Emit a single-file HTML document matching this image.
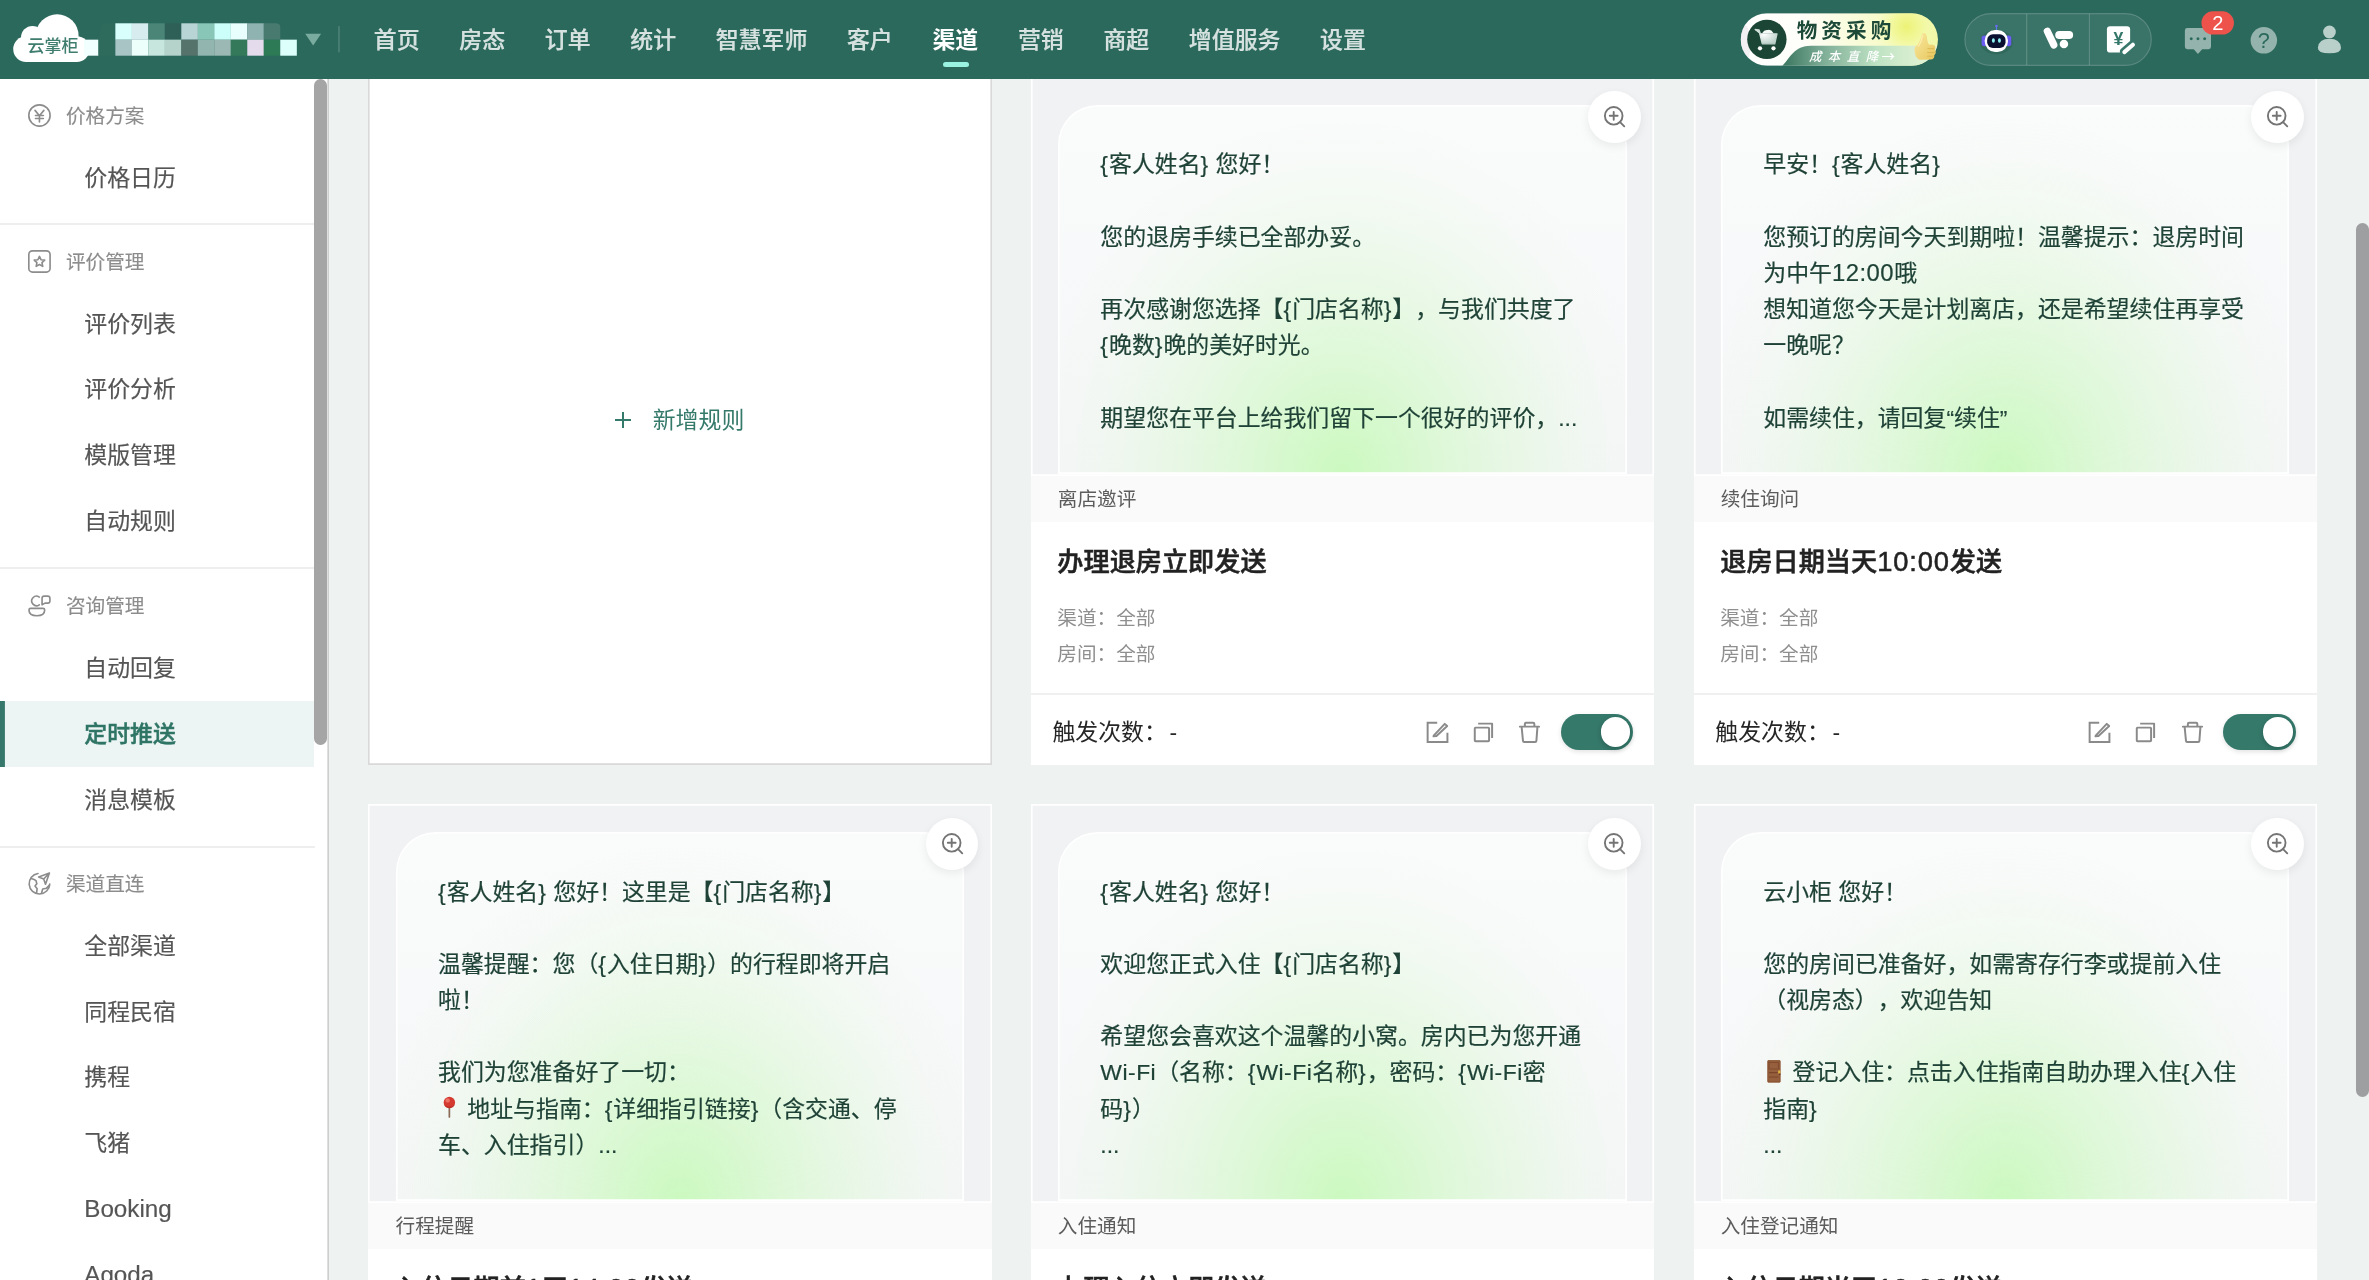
<!DOCTYPE html>
<html lang="zh-CN">
<head>
<meta charset="utf-8">
<title>定时推送 - 云掌柜</title>
<style>
*{box-sizing:border-box;margin:0;padding:0}
html,body{width:2369px;height:1280px;overflow:hidden;background:#eef2f1}
body{text-spacing-trim:space-all;font-family:"Liberation Sans","Noto Sans CJK SC",sans-serif;color:#262626;-webkit-font-smoothing:antialiased}
#app{will-change:transform;position:absolute;left:0;top:0;width:1448.1px;height:782.4px;zoom:1.636;overflow:hidden;background:#eef2f1;font-size:14px}
.abs{position:absolute}
/* ---------- header ---------- */
#hd{position:absolute;left:0;top:0;width:100%;height:48.25px;background:#2c695d;z-index:10}
#nav{position:absolute;left:216.4px;top:1.05px;height:48px;display:flex;white-space:nowrap}
#nav a{display:block;padding:0 12.13px;line-height:47.6px;font-size:14px;font-weight:500;-webkit-text-stroke:.12px rgba(255,255,255,.8);color:rgba(255,255,255,.8);text-decoration:none;position:relative}
#nav a.on{color:#fff;font-weight:700;-webkit-text-stroke:0}
#nav a.on:after{content:"";position:absolute;left:50%;margin-left:-7.5px;bottom:7.9px;width:16px;height:3.3px;border-radius:2px;background:#9af2e1}
/* ---------- sidebar ---------- */
#sb{position:absolute;left:0;top:48px;width:201.15px;bottom:0;background:#fff;box-shadow:inset -1px 0 0 #cecece}
#sb .g{position:absolute;left:40.3px;font-size:12px;line-height:20px;color:#8c8c8c;white-space:nowrap;-webkit-text-stroke:.08px #8c8c8c}
#sb .i{position:absolute;left:51.5px;font-size:14px;line-height:22px;color:#555;white-space:nowrap;-webkit-text-stroke:.1px #555}
#sb .dv{position:absolute;left:0;width:192px;height:0;margin-top:.5px;box-shadow:0 0 0 .5px #ebebeb}
#sb svg{position:absolute;left:17.1px;width:14px;height:14px;overflow:visible}
#sb .act{position:absolute;left:0;top:380.6px;width:192px;height:40.4px;background:#edf5f4;box-shadow:inset 3px 0 0 #35776a}
.thumb{position:absolute;width:8px;border-radius:4px;background:#a5a5a5}
/* ---------- main ---------- */
#main{position:absolute;left:201.15px;top:48px;right:0;bottom:0;overflow:hidden;background:#eef2f1}

/*CARDCSS*/
.add{position:absolute;width:381.2px;height:420.6px;background:#fff;box-shadow:inset 0 0 0 1px #d9d9d9}
.add .plus{position:absolute;left:150.5px;top:204.3px;width:10px;height:10px}
.add .plus:before{content:"";position:absolute;left:0;top:4.4px;width:10px;height:1.2px;background:#35796b}
.add .plus:after{content:"";position:absolute;left:4.4px;top:0;width:1.2px;height:10px;background:#35796b}
.add .addt{position:absolute;left:173.8px;top:199.2px;line-height:22px;font-size:14px;color:#35796b;white-space:nowrap}
.card{position:absolute;width:381.2px;height:420.6px;background:#fff}
.pv{position:absolute;left:0;top:0;width:100%;height:243.5px;background:#f1f2f4;box-shadow:inset 0 0 0 1px #fff;overflow:hidden}
.ph{position:absolute;left:17px;right:17px;top:17px;bottom:1.1px;box-shadow:inset 0 0 0 1px #fff;border-radius:24px 24px 0 0;background:radial-gradient(ellipse 188px 218px at 50% 100%,rgba(203,249,191,1.000) 0%,rgba(203,249,191,0.858) 10%,rgba(203,249,191,0.724) 20%,rgba(203,249,191,0.596) 30%,rgba(203,249,191,0.477) 40%,rgba(203,249,191,0.366) 50%,rgba(203,249,191,0.265) 60%,rgba(203,249,191,0.175) 70%,rgba(203,249,191,0.097) 80%,rgba(203,249,191,0.035) 90%,rgba(203,249,191,0.000) 100%),linear-gradient(180deg,#fafbfb,#f5f6f7)}
.tx{position:absolute;left:25.6px;top:25.3px;font-size:14px;line-height:22.1px;color:#1f4237;white-space:nowrap;-webkit-text-stroke:.12px #1f4237}
.em{display:inline-block;width:14px;height:14px;vertical-align:-1.55px}
.zm{position:absolute;right:8.4px;top:8.1px;width:32px;height:32px;border-radius:50%;background:#fff;box-shadow:0 2px 6px rgba(0,0,0,.07)}
.zm svg{position:absolute;left:9px;top:9px;width:14px;height:14px;overflow:visible}
.lb{position:absolute;left:0;top:243.5px;width:100%;height:28.05px;background:#fafafa;padding-left:16.6px;font-size:12px;line-height:28.05px;padding-top:.75px;color:#5c5c5c;white-space:nowrap}
.tt{position:absolute;left:16.3px;top:283.9px;font-size:16px;line-height:25px;font-weight:500;color:#222;white-space:nowrap;-webkit-text-stroke:.32px #222}
.mt{position:absolute;left:16.3px;font-size:12px;line-height:22px;color:#8f8f8f;white-space:nowrap}
.fl{position:absolute;left:0;top:376.3px;width:100%;height:1px;background:#f0f0f0}
.fc{position:absolute;left:13.3px;top:389.65px;font-size:14px;line-height:22px;color:#262626;white-space:nowrap}
.ic{position:absolute;top:393.5px;width:14px;height:14px;overflow:visible}
.sw{position:absolute;left:323.85px;top:389.2px;width:44.6px;height:22.1px;border-radius:11.05px;background:#35796b;box-shadow:0 1px 3px rgba(0,0,0,.12)}
.sw i{position:absolute;right:2px;top:2px;width:18.1px;height:18.1px;border-radius:50%;background:#fff;box-shadow:0 1px 3px rgba(0,20,15,.25)}
.tx .b{letter-spacing:.6px}.tx .d{font-size:14.6px;letter-spacing:.3px}.tx .l{letter-spacing:.3px}.tt .td{font-size:16.7px;letter-spacing:.52px}
/*/CARDCSS*/
</style>
</head>
<body>
<div id="app">

<!-- ================= HEADER ================= -->
<div id="hd">
  <!--LOGO-->
  <svg class="abs" style="left:0.00px;top:0.00px;width:244.50px;height:48.90px;overflow:visible" viewBox="0 0 2369 474" ><g fill="#fff"><rect x="78" y="215" width="452" height="153" rx="76"/><circle cx="338" cy="212" r="127"/><circle cx="192" cy="222" r="68"/></g><text x="163" y="306" font-size="101" font-weight="500" fill="#3f7d6f" font-family="Liberation Sans,Noto Sans CJK SC,sans-serif" textLength="302" lengthAdjust="spacingAndGlyphs">云掌柜</text><rect x="497" y="235" width="86" height="95" fill="#f1fffe"/><path d="M583 330 V235 L 600 150 Q 610 138 640 138 H683 V330 Z" fill="#2e6b5c"/><rect x="683.0" y="138" width="98.2" height="97.5" fill="#d8fffc"/><rect x="780.7" y="138" width="98.2" height="97.5" fill="#d6ecef"/><rect x="878.4" y="138" width="98.2" height="97.5" fill="#4a8577"/><rect x="976.1" y="138" width="98.2" height="97.5" fill="#2f6058"/><rect x="1073.8" y="138" width="98.2" height="97.5" fill="#b8d4d4"/><rect x="1171.5" y="138" width="98.2" height="97.5" fill="#88c6b8"/><rect x="1269.2" y="138" width="98.2" height="97.5" fill="#ccfff9"/><rect x="1366.9" y="138" width="98.2" height="97.5" fill="#e8fffe"/><rect x="1464.6" y="138" width="98.2" height="97.5" fill="#8fb3b0"/><path d="M1562.3 138 H1632.3 Q1660.0 138 1660.0 160 V235 H1562.3 Z" fill="#487a70"/><rect x="683.0" y="235" width="98.2" height="95" fill="#a9c4c4"/><rect x="780.7" y="235" width="98.2" height="95" fill="#ecfffb"/><rect x="878.4" y="235" width="98.2" height="95" fill="#c6e6de"/><rect x="976.1" y="235" width="98.2" height="95" fill="#b5d2cb"/><rect x="1073.8" y="235" width="98.2" height="95" fill="#55726b"/><rect x="1171.5" y="235" width="98.2" height="95" fill="#92b5b0"/><rect x="1269.2" y="235" width="98.2" height="95" fill="#9bb8b4"/><rect x="1366.9" y="235" width="98.2" height="95" fill="#347a5a"/><rect x="1464.6" y="235" width="98.2" height="95" fill="#e4dcec"/><rect x="1562.3" y="235" width="98.2" height="95" fill="#2d7a56"/><rect x="1660.0" y="235" width="98.2" height="95" fill="#dcfffc"/><path d="M1808 200 H1902 L1855 270 Z" fill="#7aab9f"/><rect x="2005" y="155" width="6" height="155" fill="rgba(255,255,255,.26)"/></svg>
  <!--/LOGO-->
  <div id="nav">
    <a>首页</a><a>房态</a><a>订单</a><a>统计</a><a>智慧军师</a><a>客户</a><a class="on">渠道</a><a>营销</a><a>商超</a><a>增值服务</a><a>设置</a>
  </div>
  <!--HDRIGHT-->
  <svg class="abs" style="left:1057.46px;top:3.06px;width:134.47px;height:42.79px;overflow:visible" viewBox="0 0 2369 754" ><defs><clipPath id="bp"><rect x="115" y="88" width="2125" height="567" rx="283"/></clipPath><linearGradient id="bg1" x1="0" x2="1" y1="0" y2="0"><stop offset="0" stop-color="#fff"/><stop offset=".3" stop-color="#fefefa"/><stop offset=".6" stop-color="#f9fcd8"/><stop offset="1" stop-color="#f0f8a6"/></linearGradient><radialGradient id="bg2" cx="1900" cy="235" r="330" gradientUnits="userSpaceOnUse"><stop offset="0" stop-color="#ecf274"/><stop offset=".45" stop-color="#f1f792" stop-opacity=".8"/><stop offset="1" stop-color="#f6fbb8" stop-opacity="0"/></radialGradient><linearGradient id="bg3" x1="600" x2="2240" y1="0" y2="0" gradientUnits="userSpaceOnUse"><stop offset="0" stop-color="#3f7a64"/><stop offset=".25" stop-color="#7fae97"/><stop offset=".6" stop-color="#bfe3c4"/><stop offset="1" stop-color="#eaf6d8"/></linearGradient><radialGradient id="bg4" cx=".4" cy=".35" r=".7"><stop offset="0" stop-color="#fff"/><stop offset="1" stop-color="#b9cfc7"/></radialGradient><linearGradient id="bg5" x1="0" x2="1" y1="0" y2="1"><stop offset="0" stop-color="#f9e9a0"/><stop offset="1" stop-color="#e7c65c"/></linearGradient></defs><g clip-path="url(#bp)"><rect x="115" y="88" width="2125" height="567" fill="url(#bg1)"/><rect x="115" y="88" width="2125" height="567" fill="url(#bg2)"/><path d="M560 660 C 650 570 690 440 870 440 H2240 V660 Z" fill="url(#bg3)"/><ellipse cx="160" cy="420" rx="60" ry="200" fill="#e9e4ea" opacity=".55"/></g><circle cx="397" cy="370" r="212" fill="#1b4534"/><path d="M275 266 L312 272 L347 418 H482 L506 310 H330 Z" fill="url(#bg4)" stroke="url(#bg4)" stroke-width="14" stroke-linejoin="round"/><path d="M345 305 Q 370 262 405 270 Q 440 258 470 305 Z" fill="#f4f8f6"/><path d="M272 264 L314 271 L324 310" fill="none" stroke="#c9dad3" stroke-width="16" stroke-linecap="round" stroke-linejoin="round"/><circle cx="323" cy="466" r="23" fill="#fff"/><circle cx="468" cy="466" r="23" fill="#fff"/><text x="718" y="360" font-size="222" font-weight="700" fill="#1d4a38" font-family="Liberation Sans,Noto Sans CJK SC,sans-serif" textLength="1020" lengthAdjust="spacing">物资采购</text><text x="850" y="603" font-size="134" font-weight="500" font-style="italic" fill="#fff" font-family="Liberation Sans,Noto Sans CJK SC,sans-serif" textLength="745" lengthAdjust="spacing">成本直降</text><text x="1632" y="603" font-size="145" font-weight="500" fill="#fff" font-family="Noto Sans CJK SC,sans-serif">→</text><g><path d="M2070 310 Q2105 285 2118 330 Q2122 385 2140 425 L2185 428 Q2225 440 2208 482 Q2228 515 2200 540 Q2205 580 2160 588 L2040 590 Q2000 575 1988 500 Q1980 445 2020 432 Q2050 385 2070 310 Z" fill="url(#bg5)"/><path d="M2130 470 H2195 M2128 512 H2200 M2130 552 H2185" stroke="#d2ac45" stroke-width="9" stroke-linecap="round" opacity=".75"/><path d="M2075 330 Q2060 400 2030 445" stroke="#fff3b8" stroke-width="12" stroke-linecap="round" opacity=".8" fill="none"/></g></svg>
  <svg class="abs" style="left:1191.93px;top:3.06px;width:134.47px;height:42.79px;overflow:visible" viewBox="0 0 2369 754" ><rect x="160" y="93" width="2008" height="557" rx="278" fill="rgba(255,255,255,.065)" stroke="rgba(255,255,255,.2)" stroke-width="12"/><path d="M826 98 V646 M1501 98 V646" stroke="rgba(255,255,255,.2)" stroke-width="12"/><g><ellipse cx="500" cy="400" rx="175" ry="130" fill="#1c4a40" opacity=".25"/><rect x="340" y="328" width="60" height="115" rx="28" fill="#6b5df2"/><rect x="600" y="328" width="60" height="115" rx="28" fill="#6b5df2"/><path d="M500 230 V280" stroke="#5a7cf0" stroke-width="12"/><circle cx="500" cy="226" r="14" fill="#6a6cf3"/><path d="M465 285 Q500 250 535 285 Z" fill="#5f8ef5"/><rect x="374" y="268" width="250" height="238" rx="112" fill="#fff"/><rect x="400" y="315" width="198" height="148" rx="62" fill="#0a1030"/><ellipse cx="467" cy="382" rx="16" ry="25" fill="#8df1f0"/><ellipse cx="532" cy="382" rx="16" ry="25" fill="#8df1f0"/></g><g fill="#fff"><path d="M1048 283 L1118 430" stroke="#fff" stroke-width="78" stroke-linecap="round"/><rect x="1133" y="279" width="193" height="88" rx="44"/><circle cx="1227" cy="421" r="46"/></g><g><path d="M1690 262 Q1690 228 1724 228 H1905 Q1940 228 1940 262 V400 L1850 512 H1724 Q1690 512 1690 478 Z" fill="#fff"/><path d="M1872 500 L1966 420" stroke="#38776b" stroke-width="82" stroke-linecap="round"/><path d="M1878 508 L1970 428" stroke="#fff" stroke-width="44" stroke-linecap="round"/><text x="1813" y="434" font-size="190" font-weight="700" text-anchor="middle" fill="#35776a" font-family="Liberation Sans,Noto Sans CJK SC,sans-serif">¥</text></g></svg>
  <svg class="abs" style="left:1320.29px;top:0.00px;width:127.75px;height:48.90px;overflow:visible" viewBox="0 0 2369 907" ><path d="M310 318 H550 Q578 318 578 346 V530 Q578 558 550 558 H478 L430 612 L382 558 H310 Q282 558 282 530 V346 Q282 318 310 318 Z" fill="#94b3ac"/><circle cx="354" cy="438" r="17" fill="#2c695d"/><circle cx="430" cy="438" r="17" fill="#2c695d"/><circle cx="506" cy="438" r="17" fill="#2c695d"/><rect x="470" y="128" width="368" height="264" rx="132" fill="#ee534b"/><text x="655" y="345" font-size="228" text-anchor="middle" fill="#fff" font-family="Liberation Sans,Noto Sans CJK SC,sans-serif">2</text><circle cx="1177" cy="457" r="150" fill="#94b3ac"/><text x="1177" y="545" font-size="245" text-anchor="middle" fill="#2c695d" font-family="Liberation Sans,Noto Sans CJK SC,sans-serif">?</text><circle cx="1921" cy="362" r="72" fill="#b9cfca"/><path d="M1790 540 Q1800 440 1921 440 Q2042 440 2052 540 Q2055 604 1921 604 Q1787 604 1790 540 Z" fill="#b9cfca"/></svg>
  <!--/HDRIGHT-->
</div>

<!-- ================= SIDEBAR ================= -->
<div id="sb">
  <!--SIDEBAR-->
  <div class="act"></div>
  <div class="dv" style="top:88.7px"></div>
  <div class="dv" style="top:298.9px"></div>
  <div class="dv" style="top:469.0px"></div>
  <svg viewBox="0 0 14 14" style="top:15.3px"><circle cx="7" cy="7" r="6.5" fill="none" stroke="#8c8c8c" stroke-width="1"/><path d="M4.3 3.9 L7 7.2 L9.7 3.9 M4.6 7 H9.4 M4.6 8.9 H9.4 M7 7.2 V11" fill="none" stroke="#8c8c8c" stroke-width="1" stroke-linecap="round" stroke-linejoin="round"/></svg><div class="g" style="top:13.0px">价格方案</div>
  <svg viewBox="0 0 14 14" style="top:104.8px"><rect x="0.5" y="0.5" width="13" height="13" rx="2.2" fill="none" stroke="#8c8c8c" stroke-width="1"/><path d="M7 3.9 L7.95 5.95 L10.2 6.2 L8.55 7.75 L9 10 L7 8.9 L5 10 L5.45 7.75 L3.8 6.2 L6.05 5.95 Z" fill="none" stroke="#8c8c8c" stroke-width="1" stroke-linejoin="round"/></svg><div class="g" style="top:102.4px">评价管理</div>
  <svg viewBox="0 0 14 14" style="top:315.3px"><path d="M6.9 1.9 A2.9 2.9 0 1 0 6.9 6.6" fill="none" stroke="#8c8c8c" stroke-width="1" stroke-linecap="round"/><path d="M8.6 6.6 V2.6 Q8.6 1.3 9.9 1.3 H12.1 Q13.4 1.3 13.4 2.6 V4.3 Q13.4 5.6 12.1 5.6 H10.4 Z" fill="none" stroke="#8c8c8c" stroke-width="1" stroke-linejoin="round"/><path d="M1.6 8.8 H9.2 Q10.2 8.8 10.2 9.8 Q10.2 13.3 5.4 13.3 Q0.6 13.3 0.6 9.8 Q0.6 8.8 1.6 8.8 Z" fill="none" stroke="#8c8c8c" stroke-width="1" stroke-linejoin="round"/></svg><div class="g" style="top:312.9px">咨询管理</div>
  <svg viewBox="0 0 14 14" style="top:484.9px"><path d="M6.1 0.9 A6.3 6.3 0 1 0 13.3 7.4" fill="none" stroke="#8c8c8c" stroke-width="1" stroke-linecap="round"/><path d="M13.1 0.6 L6.5 3 L9.6 4.3 L10.7 7.5 Z M9.6 4.3 L13.1 0.6" fill="none" stroke="#8c8c8c" stroke-width="1" stroke-linejoin="round"/><path d="M1.7 4 Q3.6 4.2 4.9 5.3 L5.4 7.2 L4.3 8.6 L5.6 10.2 L5.2 12.9 M13 8.2 L11.3 9.9 L9 10.4 L8.3 12.8" fill="none" stroke="#8c8c8c" stroke-width="1" stroke-linejoin="round" stroke-linecap="round"/></svg><div class="g" style="top:482.5px">渠道直连</div>
  <div class="i" style="top:50.28px">价格日历</div>
  <div class="i" style="top:139.49px">评价列表</div>
  <div class="i" style="top:179.62px">评价分析</div>
  <div class="i" style="top:219.72px">模版管理</div>
  <div class="i" style="top:260.37px">自动规则</div>
  <div class="i" style="top:349.79px">自动回复</div>
  <div class="i" style="top:390.10px;color:#2f7566;font-weight:500;-webkit-text-stroke:.3px #2f7566">定时推送</div>
  <div class="i" style="top:430.41px">消息模板</div>
  <div class="i" style="top:519.60px">全部渠道</div>
  <div class="i" style="top:560.12px">同程民宿</div>
  <div class="i" style="top:600.22px">携程</div>
  <div class="i" style="top:640.50px">飞猪</div>
  <div class="i" style="top:680.13px;font-size:14.8px">Booking</div>
  <div class="i" style="top:720.35px;font-size:14.8px">Agoda</div>
  <div class="thumb" style="left:191.9px;top:0.5px;height:406.9px"></div>
  <!--/SIDEBAR-->
</div>

<!-- ================= MAIN ================= -->
<div id="main">
  <!--CARDS-->
  <div class="add" style="left:24.03px;top:-0.75px"><span class="plus"></span><span class="addt">新增规则</span></div>
  <div class="card" style="left:428.86px;top:-0.75px"><div class="pv"><div class="ph"><div class="tx"><span class="b">{</span>客人姓名<span class="b">}</span> 您好！<br><br>您的退房手续已全部办妥。<br><br>再次感谢您选择【<span class="b">{</span>门店名称<span class="b">}</span>】，与我们共度了<br><span class="b">{</span>晚数<span class="b">}</span>晚的美好时光。<br><br>期望您在平台上给我们留下一个很好的评价，...</div></div><div class="zm"><svg viewBox="-7 -7 14 14"><circle cx="-0.45" cy="-0.4" r="5.4" fill="none" stroke="#747474" stroke-width="1.15"/><path d="M-2.85 -0.4 H1.95 M-0.45 -2.8 V2 M3.45 3.5 L6 6.05" fill="none" stroke="#747474" stroke-width="1.15" stroke-linecap="round"/></svg></div></div><div class="lb">离店邀评</div><div class="tt">办理退房立即发送</div><div class="mt" style="top:320.1px">渠道：全部</div><div class="mt" style="top:341.85px">房间：全部</div><div class="fl"></div><div class="fc">触发次数：<span style="margin-left:1.6px">-</span></div><svg class="ic" style="left:241.35px" viewBox="-7 -7 14 14"><path d="M-0.15 -5.9 H-6 V5.85 H6.1 V0.15" fill="none" stroke="#8a8a8a" stroke-width="1.2"/><path d="M-2.3 1.95 L4.45 -5.25 L5.95 -3.9 L-0.6 2.2 L-2.4 2.4 Z" fill="none" stroke="#8a8a8a" stroke-width="1.2" stroke-linejoin="round"/></svg><svg class="ic" style="left:269.45px" viewBox="-7 -7 14 14"><rect x="-5.3" y="-2.95" width="8.75" height="8.35" rx=".5" fill="none" stroke="#8a8a8a" stroke-width="1.2"/><path d="M-3.25 -5.4 H5.3 V3.35" fill="none" stroke="#8a8a8a" stroke-width="1.2" stroke-linejoin="round"/></svg><svg class="ic" style="left:297.65px" viewBox="-7 -7 14 14"><path d="M-5.85 -3.55 H5.9 M-2.8 -3.55 V-5.2 Q-2.8 -5.9 -2.1 -5.9 H2.3 Q3 -5.9 3 -5.2 V-3.55 M-4.8 -3.55 L-3.95 5.2 Q-3.9 5.85 -3.2 5.85 H3.5 Q4.2 5.85 4.25 5.2 L4.9 -3.55" fill="none" stroke="#8a8a8a" stroke-width="1.2" stroke-linejoin="round" stroke-linecap="round"/></svg><div class="sw"><i></i></div></div>
  <div class="card" style="left:834.06px;top:-0.75px"><div class="pv"><div class="ph"><div class="tx">早安！<span class="b">{</span>客人姓名<span class="b">}</span><br><br>您预订的房间今天到期啦！温馨提示：退房时间<br>为中午<span class="d">12:00</span>哦<br>想知道您今天是计划离店，还是希望续住再享受<br>一晚呢？<br><br>如需续住，请回复“续住”</div></div><div class="zm"><svg viewBox="-7 -7 14 14"><circle cx="-0.45" cy="-0.4" r="5.4" fill="none" stroke="#747474" stroke-width="1.15"/><path d="M-2.85 -0.4 H1.95 M-0.45 -2.8 V2 M3.45 3.5 L6 6.05" fill="none" stroke="#747474" stroke-width="1.15" stroke-linecap="round"/></svg></div></div><div class="lb">续住询问</div><div class="tt">退房日期当天<span class="td">10:00</span>发送</div><div class="mt" style="top:320.1px">渠道：全部</div><div class="mt" style="top:341.85px">房间：全部</div><div class="fl"></div><div class="fc">触发次数：<span style="margin-left:1.6px">-</span></div><svg class="ic" style="left:241.35px" viewBox="-7 -7 14 14"><path d="M-0.15 -5.9 H-6 V5.85 H6.1 V0.15" fill="none" stroke="#8a8a8a" stroke-width="1.2"/><path d="M-2.3 1.95 L4.45 -5.25 L5.95 -3.9 L-0.6 2.2 L-2.4 2.4 Z" fill="none" stroke="#8a8a8a" stroke-width="1.2" stroke-linejoin="round"/></svg><svg class="ic" style="left:269.45px" viewBox="-7 -7 14 14"><rect x="-5.3" y="-2.95" width="8.75" height="8.35" rx=".5" fill="none" stroke="#8a8a8a" stroke-width="1.2"/><path d="M-3.25 -5.4 H5.3 V3.35" fill="none" stroke="#8a8a8a" stroke-width="1.2" stroke-linejoin="round"/></svg><svg class="ic" style="left:297.65px" viewBox="-7 -7 14 14"><path d="M-5.85 -3.55 H5.9 M-2.8 -3.55 V-5.2 Q-2.8 -5.9 -2.1 -5.9 H2.3 Q3 -5.9 3 -5.2 V-3.55 M-4.8 -3.55 L-3.95 5.2 Q-3.9 5.85 -3.2 5.85 H3.5 Q4.2 5.85 4.25 5.2 L4.9 -3.55" fill="none" stroke="#8a8a8a" stroke-width="1.2" stroke-linejoin="round" stroke-linecap="round"/></svg><div class="sw"><i></i></div></div>
  <div class="card" style="left:24.03px;top:443.69px"><div class="pv"><div class="ph"><div class="tx"><span class="b">{</span>客人姓名<span class="b">}</span> 您好！这里是【<span class="b">{</span>门店名称<span class="b">}</span>】<br><br>温馨提醒：您（<span class="b">{</span>入住日期<span class="b">}</span>）的行程即将开启<br>啦！<br><br>我们为您准备好了一切：<br><svg class="em" viewBox="0 0 14 14"><path d="M6.95 7 V12.8" stroke="#8b6b58" stroke-width="1.05" stroke-linecap="round"/><circle cx="6.95" cy="3.95" r="3.5" fill="#d43a2f"/><path d="M3.75 5.3 A3.5 3.5 0 0 0 10.15 5.3 A4.6 4.6 0 0 1 3.75 5.3Z" fill="#b52a22" opacity=".7"/><circle cx="5.9" cy="2.7" r="1.35" fill="#f0776b" opacity=".9"/></svg> 地址与指南：<span class="b">{</span>详细指引链接<span class="b">}</span>（含交通、停<br>车、入住指引）...</div></div><div class="zm"><svg viewBox="-7 -7 14 14"><circle cx="-0.45" cy="-0.4" r="5.4" fill="none" stroke="#747474" stroke-width="1.15"/><path d="M-2.85 -0.4 H1.95 M-0.45 -2.8 V2 M3.45 3.5 L6 6.05" fill="none" stroke="#747474" stroke-width="1.15" stroke-linecap="round"/></svg></div></div><div class="lb">行程提醒</div><div class="tt">入住日期前<span class="td">1</span>天<span class="td">14:00</span>发送</div><div class="mt" style="top:320.1px">渠道：全部</div><div class="mt" style="top:341.85px">房间：全部</div><div class="fl"></div><div class="fc">触发次数：<span style="margin-left:1.6px">-</span></div><svg class="ic" style="left:241.35px" viewBox="-7 -7 14 14"><path d="M-0.15 -5.9 H-6 V5.85 H6.1 V0.15" fill="none" stroke="#8a8a8a" stroke-width="1.2"/><path d="M-2.3 1.95 L4.45 -5.25 L5.95 -3.9 L-0.6 2.2 L-2.4 2.4 Z" fill="none" stroke="#8a8a8a" stroke-width="1.2" stroke-linejoin="round"/></svg><svg class="ic" style="left:269.45px" viewBox="-7 -7 14 14"><rect x="-5.3" y="-2.95" width="8.75" height="8.35" rx=".5" fill="none" stroke="#8a8a8a" stroke-width="1.2"/><path d="M-3.25 -5.4 H5.3 V3.35" fill="none" stroke="#8a8a8a" stroke-width="1.2" stroke-linejoin="round"/></svg><svg class="ic" style="left:297.65px" viewBox="-7 -7 14 14"><path d="M-5.85 -3.55 H5.9 M-2.8 -3.55 V-5.2 Q-2.8 -5.9 -2.1 -5.9 H2.3 Q3 -5.9 3 -5.2 V-3.55 M-4.8 -3.55 L-3.95 5.2 Q-3.9 5.85 -3.2 5.85 H3.5 Q4.2 5.85 4.25 5.2 L4.9 -3.55" fill="none" stroke="#8a8a8a" stroke-width="1.2" stroke-linejoin="round" stroke-linecap="round"/></svg><div class="sw"><i></i></div></div>
  <div class="card" style="left:428.86px;top:443.69px"><div class="pv"><div class="ph"><div class="tx"><span class="b">{</span>客人姓名<span class="b">}</span> 您好！<br><br>欢迎您正式入住【<span class="b">{</span>门店名称<span class="b">}</span>】<br><br>希望您会喜欢这个温馨的小窝。房内已为您开通<br><span class="l">Wi-Fi</span>（名称：<span class="b">{</span><span class="l">Wi-Fi</span>名称<span class="b">}</span>，密码：<span class="b">{</span><span class="l">Wi-Fi</span>密<br>码<span class="b">}</span>）<br>...</div></div><div class="zm"><svg viewBox="-7 -7 14 14"><circle cx="-0.45" cy="-0.4" r="5.4" fill="none" stroke="#747474" stroke-width="1.15"/><path d="M-2.85 -0.4 H1.95 M-0.45 -2.8 V2 M3.45 3.5 L6 6.05" fill="none" stroke="#747474" stroke-width="1.15" stroke-linecap="round"/></svg></div></div><div class="lb">入住通知</div><div class="tt">办理入住立即发送</div><div class="mt" style="top:320.1px">渠道：全部</div><div class="mt" style="top:341.85px">房间：全部</div><div class="fl"></div><div class="fc">触发次数：<span style="margin-left:1.6px">-</span></div><svg class="ic" style="left:241.35px" viewBox="-7 -7 14 14"><path d="M-0.15 -5.9 H-6 V5.85 H6.1 V0.15" fill="none" stroke="#8a8a8a" stroke-width="1.2"/><path d="M-2.3 1.95 L4.45 -5.25 L5.95 -3.9 L-0.6 2.2 L-2.4 2.4 Z" fill="none" stroke="#8a8a8a" stroke-width="1.2" stroke-linejoin="round"/></svg><svg class="ic" style="left:269.45px" viewBox="-7 -7 14 14"><rect x="-5.3" y="-2.95" width="8.75" height="8.35" rx=".5" fill="none" stroke="#8a8a8a" stroke-width="1.2"/><path d="M-3.25 -5.4 H5.3 V3.35" fill="none" stroke="#8a8a8a" stroke-width="1.2" stroke-linejoin="round"/></svg><svg class="ic" style="left:297.65px" viewBox="-7 -7 14 14"><path d="M-5.85 -3.55 H5.9 M-2.8 -3.55 V-5.2 Q-2.8 -5.9 -2.1 -5.9 H2.3 Q3 -5.9 3 -5.2 V-3.55 M-4.8 -3.55 L-3.95 5.2 Q-3.9 5.85 -3.2 5.85 H3.5 Q4.2 5.85 4.25 5.2 L4.9 -3.55" fill="none" stroke="#8a8a8a" stroke-width="1.2" stroke-linejoin="round" stroke-linecap="round"/></svg><div class="sw"><i></i></div></div>
  <div class="card" style="left:834.06px;top:443.69px"><div class="pv"><div class="ph"><div class="tx">云小柜 您好！<br><br>您的房间已准备好，如需寄存行李或提前入住<br>（视房态），欢迎告知<br><br><svg class="em" viewBox="0 0 14 14"><rect x="2.75" y="0.2" width="7.9" height="13.5" rx=".4" fill="#96603f"/><rect x="3" y="0.45" width="7.4" height="13" rx=".3" fill="none" stroke="#84502f" stroke-width=".5"/><rect x="3.7" y="1.5" width="5.7" height="4" fill="none" stroke="#81492b" stroke-width=".55"/><path d="M3.7 7.7 H9 M3.7 10.4 H9.4" stroke="#7a4528" stroke-width=".75"/><rect x="9.3" y="6.4" width="1.35" height="1.9" fill="#e3b341"/><rect x="9.7" y="8.3" width=".95" height=".9" fill="#6b3a22"/></svg> 登记入住：点击入住指南自助办理入住<span class="b">{</span>入住<br>指南<span class="b">}</span><br>...</div></div><div class="zm"><svg viewBox="-7 -7 14 14"><circle cx="-0.45" cy="-0.4" r="5.4" fill="none" stroke="#747474" stroke-width="1.15"/><path d="M-2.85 -0.4 H1.95 M-0.45 -2.8 V2 M3.45 3.5 L6 6.05" fill="none" stroke="#747474" stroke-width="1.15" stroke-linecap="round"/></svg></div></div><div class="lb">入住登记通知</div><div class="tt">入住日期当天<span class="td">10:00</span>发送</div><div class="mt" style="top:320.1px">渠道：全部</div><div class="mt" style="top:341.85px">房间：全部</div><div class="fl"></div><div class="fc">触发次数：<span style="margin-left:1.6px">-</span></div><svg class="ic" style="left:241.35px" viewBox="-7 -7 14 14"><path d="M-0.15 -5.9 H-6 V5.85 H6.1 V0.15" fill="none" stroke="#8a8a8a" stroke-width="1.2"/><path d="M-2.3 1.95 L4.45 -5.25 L5.95 -3.9 L-0.6 2.2 L-2.4 2.4 Z" fill="none" stroke="#8a8a8a" stroke-width="1.2" stroke-linejoin="round"/></svg><svg class="ic" style="left:269.45px" viewBox="-7 -7 14 14"><rect x="-5.3" y="-2.95" width="8.75" height="8.35" rx=".5" fill="none" stroke="#8a8a8a" stroke-width="1.2"/><path d="M-3.25 -5.4 H5.3 V3.35" fill="none" stroke="#8a8a8a" stroke-width="1.2" stroke-linejoin="round"/></svg><svg class="ic" style="left:297.65px" viewBox="-7 -7 14 14"><path d="M-5.85 -3.55 H5.9 M-2.8 -3.55 V-5.2 Q-2.8 -5.9 -2.1 -5.9 H2.3 Q3 -5.9 3 -5.2 V-3.55 M-4.8 -3.55 L-3.95 5.2 Q-3.9 5.85 -3.2 5.85 H3.5 Q4.2 5.85 4.25 5.2 L4.9 -3.55" fill="none" stroke="#8a8a8a" stroke-width="1.2" stroke-linejoin="round" stroke-linecap="round"/></svg><div class="sw"><i></i></div></div>
  <div class="thumb" style="left:1238.9px;top:88.1px;height:534.2px;background:#9e9fa0"></div>
  <!--/CARDS-->
</div>

</div>
</body>
</html>
